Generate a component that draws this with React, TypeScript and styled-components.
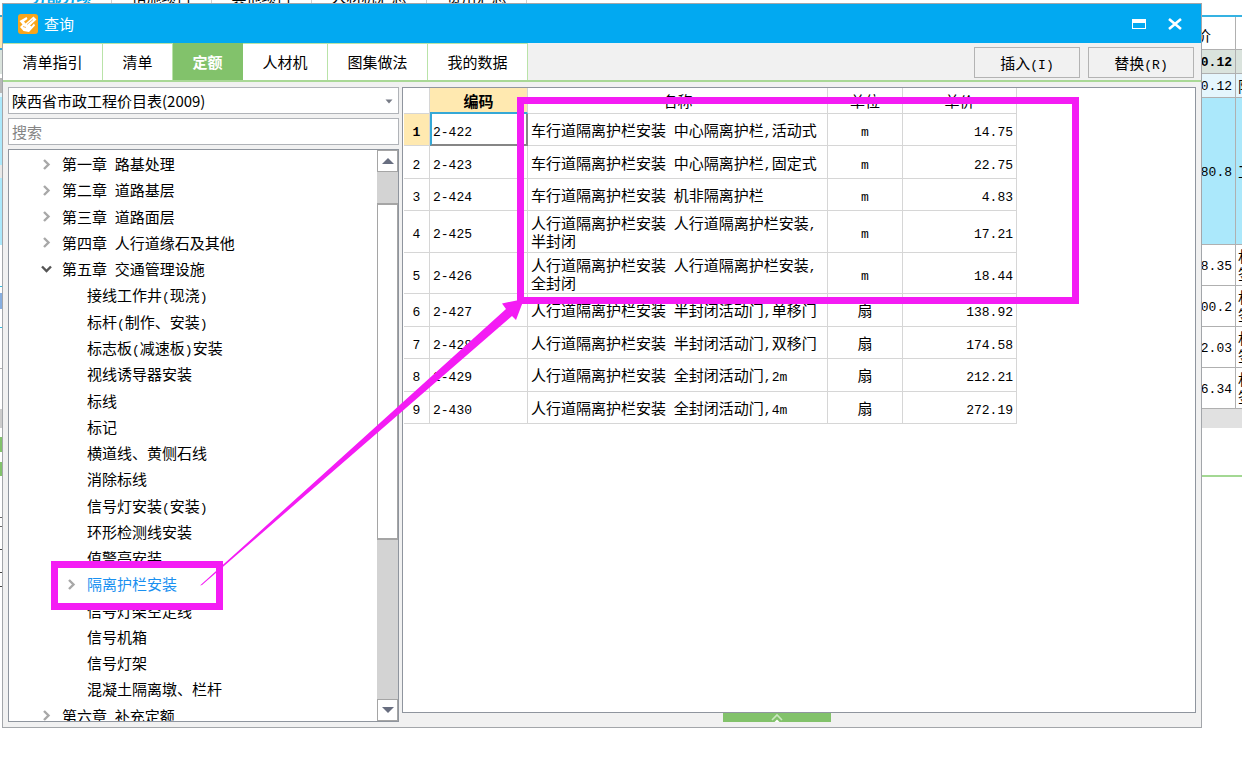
import React from "react";
import styled, { createGlobalStyle, css } from "styled-components";

const magenta = "#f41cf4";
const line = "#d6d6d6";

const GlobalStyle = createGlobalStyle`
  * { box-sizing: border-box; }
  body {
    margin: 0;
    background: #fff;
    color: #000;
    font: 15px/18px "Noto Sans CJK SC", sans-serif;
  }
  button, input, select { font: inherit; color: inherit; }
`;

const Page = styled.div`
  position: relative;
  min-height: 100vh;
  overflow: hidden;
`;

/* ---------- text with half-width runs ---------- */

const Half = styled.span`
  font-family: "Liberation Mono", monospace;
  font-size: 13px;
  line-height: 0;
`;

const Mixed = ({ text }: { text: string }) => (
  <>
    {text.split(/([\x20-\x7e]+)/).map((part, i) =>
      i % 2 ? <Half key={i}>{part}</Half> : part
    )}
  </>
);

/* ---------- main window behind the dialog ---------- */

const Backdrop = styled.div`
  position: absolute;
  inset: 0;
  display: flex;
  flex-direction: column;
`;

const BackTabs = styled.div`
  display: flex;
  align-items: flex-end;
  height: 6px;
  overflow: hidden;
  padding-left: 12px;
`;

const BackTab = styled.span<{ $active?: boolean; $wide?: boolean }>`
  width: ${(p) => (p.$wide ? 115 : 100)}px;
  text-align: center;
  border-right: 1px solid #d0d0d0;
  ${(p) => p.$active && css`color: #02a9f1; font-weight: 700;`}
`;

const BackBody = styled.div`
  flex: 1;
  display: flex;
  justify-content: space-between;
  padding-top: 9px;
`;

const BackEdge = styled.div`
  width: 3px;
`;

const Stripe = styled.div<{ $h: number; $bg?: string }>`
  height: ${(p) => p.$h}px;
  background: ${(p) => p.$bg || "#fff"};
`;

const BackSide = styled.div`
  width: 42px;
`;

const BackRow = styled.div<{ $h: number; $bg?: string; $bold?: boolean }>`
  display: flex;
  align-items: center;
  height: ${(p) => p.$h}px;
  background: ${(p) => p.$bg || "#fff"};
  border-bottom: 1px solid #b0b0b0;
  font-weight: ${(p) => (p.$bold ? 700 : 400)};
  overflow: hidden;
`;

const BackCell = styled.div<{ $head?: boolean }>`
  display: flex;
  justify-content: flex-end;
  align-items: center;
  align-self: stretch;
  width: 36px;
  padding: 3px ${(p) => (p.$head ? 24 : 3)}px 0 0;
  border-right: 1px solid #b0b0b0;
  flex: none;
  white-space: nowrap;
`;

const BackNote = styled.div`
  padding-left: 2px;
  width: 17px;
  flex: none;
  line-height: 18px;
`;

/* ---------- dialog ---------- */

const Dialog = styled.section`
  position: absolute;
  top: 3px;
  right: 40px;
  bottom: 44px;
  left: 2px;
  display: flex;
  flex-direction: column;
  background: #f1f1f1;
  border: 1px solid #a3a6aa;
`;

const TitleBar = styled.header`
  display: flex;
  align-items: center;
  gap: 6px;
  height: 39px;
  padding: 0 18px 0 15px;
  background: #02a9f1;
  color: #fff;
`;

const Title = styled.h1`
  flex: 1;
  margin: 0;
  font-size: 15px;
  font-weight: 400;
`;

const WindowButton = styled.button`
  display: flex;
  width: 16px;
  height: 16px;
  padding: 0;
  margin-left: 14px;
  border: 0;
  background: none;
`;

const Toolbar = styled.div`
  display: flex;
  align-items: stretch;
  height: 39px;
  flex: none;
  border-bottom: 2px solid #a9d896;
`;

const Tab = styled.button<{ $w: number; $active?: boolean }>`
  width: ${(p) => p.$w}px;
  padding: 0;
  border: 0;
  border-top: 1px solid #b9e3a8;
  border-right: 1px solid #b9e3a8;
  background: #fff;
  ${(p) => p.$active && css`
    background: #82c26b;
    border-color: #82c26b;
    color: #fff;
    font-weight: 700;
  `}
`;

const Actions = styled.div`
  display: flex;
  gap: 8px;
  margin-left: auto;
  padding: 4px 7px 2px 0;
`;

const ActionButton = styled.button`
  width: 106px;
  padding: 0;
  border: 1px solid #b3b3b3;
  background: #f1f1f1;
`;

const Content = styled.div`
  flex: 1;
  min-height: 0;
  display: flex;
  gap: 3px;
  padding: 5px;
`;

const SidePanel = styled.aside`
  display: flex;
  flex-direction: column;
  gap: 4px;
  width: 391px;
  flex: none;
`;

const SelectWrap = styled.label`
  position: relative;
  display: block;
  height: 27px;
`;

const BookSelect = styled.select`
  width: 100%;
  height: 100%;
  padding: 0 24px 0 3px;
  appearance: none;
  border: 1px solid #b0b3b8;
  border-radius: 0;
  background: #fff;
`;

const SelectArrow = styled.svg`
  position: absolute;
  top: 12px;
  right: 6px;
`;

const SearchInput = styled.input`
  height: 27px;
  padding: 0 3px;
  border: 1px solid #b0b3b8;
  background: #fff;
  &::placeholder { color: #858585; }
`;

const TreeBox = styled.div`
  flex: 1;
  min-height: 0;
  display: flex;
  border: 1px solid #8f959e;
  background: #fff;
  overflow: hidden;
`;

const TreeList = styled.ul`
  flex: 1;
  display: flex;
  flex-direction: column;
  margin: 1px 0 -8px;
  padding: 0;
  list-style: none;
`;

const TreeItem = styled.li<{ $child?: boolean; $selected?: boolean }>`
  flex: 1;
  display: flex;
  align-items: center;
  gap: 10px;
  padding-left: ${(p) => (p.$child ? 57 : 32)}px;
  color: ${(p) => (p.$selected ? "#1a90f0" : "#000")};
`;

const Chevron = styled.svg`
  flex: none;
  width: 11px;
  height: 11px;
  fill: none;
`;

const ScrollBar = styled.div`
  display: flex;
  flex-direction: column;
  width: 21px;
  background: #d3d3d3;
`;

const ScrollButton = styled.button`
  height: 22px;
  padding: 0;
  display: grid;
  place-items: center;
  border: 1px solid #a5a5a5;
  background: #fff;
`;

const ScrollTrack = styled.div`
  flex: 1;
  display: flex;
  flex-direction: column;
`;

const ScrollGap = styled.div<{ $grow: number }>`
  flex: ${(p) => p.$grow};
`;

const ScrollThumb = styled.div`
  flex: 336;
  background: #fff;
  border: 1px solid #a5a5a5;
  border-width: 2px 1px;
`;

const GridColumn = styled.main`
  flex: 1;
  min-width: 0;
  display: flex;
  flex-direction: column;
`;

const GridBox = styled.div`
  flex: 1;
  min-height: 0;
  padding-left: 1px;
  border: 1px solid #8f959e;
  background: #fff;
`;

const Table = styled.table`
  width: 613px;
  height: 336px;
  table-layout: fixed;
  border-collapse: separate;
  border-spacing: 0;
`;

const Col = styled.col<{ $w: number }>`
  width: ${(p) => p.$w}px;
`;

const cell = css`
  padding: 1px 3px 0;
  border: 0 solid ${line};
  border-width: 0 1px 1px 0;
  font-weight: 400;
  text-align: center;
`;

const Head = styled.th<{ $active?: boolean }>`
  ${cell}
  height: 26px;
  ${(p) => p.$active && css`
    background: #ffe9b0;
    border-bottom: 2px solid #35a8d6;
    font-weight: 700;
  `}
`;

const RowNumber = styled.th<{ $active?: boolean }>`
  ${cell}
  ${(p) => p.$active && css`
    background: #ffe9b0;
    font-weight: 700;
  `}
`;

const Row = styled.tr<{ $tall?: boolean }>`
  height: ${(p) => (p.$tall ? 41 : 32)}px;
`;

const Cell = styled.td<{ $align?: string; $focus?: boolean }>`
  ${cell}
  text-align: ${(p) => p.$align || "left"};
  ${(p) => p.$focus && css`
    padding-left: 1px;
    border-left: 2px solid #35a8d6;
    border-right: 2px solid #868686;
    border-bottom: 2px solid #868686;
  `}
`;

const Handle = styled.button`
  display: grid;
  place-items: center;
  align-self: center;
  width: 108px;
  height: 9px;
  margin-right: 44px;
  padding: 0;
  border: 0;
  background: #82c26b;
`;

const Annotation = styled.svg`
  position: absolute;
  top: 0;
  left: 0;
  pointer-events: none;
`;

/* ---------- data ---------- */

const tabs = [
  { label: "清单指引", w: 100 },
  { label: "清单", w: 70 },
  { label: "定额", w: 70, active: true },
  { label: "人材机", w: 85 },
  { label: "图集做法", w: 100 },
  { label: "我的数据", w: 100 },
];

type Node = { label: string; child?: boolean; icon?: "closed" | "open"; selected?: boolean };

const tree: Node[] = [
  { label: "第一章 路基处理", icon: "closed" },
  { label: "第二章 道路基层", icon: "closed" },
  { label: "第三章 道路面层", icon: "closed" },
  { label: "第四章 人行道缘石及其他", icon: "closed" },
  { label: "第五章 交通管理设施", icon: "open" },
  { label: "接线工作井(现浇)", child: true },
  { label: "标杆(制作、安装)", child: true },
  { label: "标志板(减速板)安装", child: true },
  { label: "视线诱导器安装", child: true },
  { label: "标线", child: true },
  { label: "标记", child: true },
  { label: "横道线、黄侧石线", child: true },
  { label: "消除标线", child: true },
  { label: "信号灯安装(安装)", child: true },
  { label: "环形检测线安装", child: true },
  { label: "值警亭安装", child: true },
  { label: "隔离护栏安装", child: true, icon: "closed", selected: true },
  { label: "信号灯架空走线", child: true },
  { label: "信号机箱", child: true },
  { label: "信号灯架", child: true },
  { label: "混凝土隔离墩、栏杆", child: true },
  { label: "第六章 补充定额", icon: "closed" },
];

const rows = [
  ["2-422", "车行道隔离护栏安装 中心隔离护栏,活动式", "m", "14.75"],
  ["2-423", "车行道隔离护栏安装 中心隔离护栏,固定式", "m", "22.75"],
  ["2-424", "车行道隔离护栏安装 机非隔离护栏", "m", "4.83"],
  ["2-425", "人行道隔离护栏安装 人行道隔离护栏安装,半封闭", "m", "17.21"],
  ["2-426", "人行道隔离护栏安装 人行道隔离护栏安装,全封闭", "m", "18.44"],
  ["2-427", "人行道隔离护栏安装 半封闭活动门,单移门", "扇", "138.92"],
  ["2-428", "人行道隔离护栏安装 半封闭活动门,双移门", "扇", "174.58"],
  ["2-429", "人行道隔离护栏安装 全封闭活动门,2m", "扇", "212.21"],
  ["2-430", "人行道隔离护栏安装 全封闭活动门,4m", "扇", "272.19"],
];

const backRows = ["8.35", "00.2", "2.03", "6.34"];

const leftStripes: [number, string][] = [
  [2, "#35a8d6"], [31, "#ffe9b0"], [2, "#35a8d6"], [24, "#dae3dd"], [4, "#ffffff"],
  [15, "#b8b8b8"], [4, "#e5f6fd"], [68, "#abe8fb"], [13, "#e8e8e8"], [67, "#abe8fb"],
  [41, "#ffffff"], [1, "#35bde0"], [6, "#ffffff"], [16, "#86aee0"], [18, "#ffffff"],
  [1, "#35bde0"], [40, "#ffffff"], [1, "#b0b0b0"], [40, "#ffffff"], [19, "#cccccc"],
  [9, "#ffffff"], [15, "#82c26b"], [10, "#ffffff"], [14, "#82c26b"], [41, "#ffffff"],
  [1, "#666666"], [8, "#ffffff"], [1, "#666666"], [22, "#ffffff"], [1, "#444444"],
  [22, "#ffffff"], [1, "#444444"], [13, "#ffffff"], [1, "#444444"],
];

const TreeIcon = ({ open }: { open?: boolean }) => (
  <Chevron viewBox="0 0 11 11" aria-hidden="true">
    {open ? (
      <path d="M1 2.5 L5.5 7 L10 2.5" stroke="#555" strokeWidth="2.4" />
    ) : (
      <path d="M3 1 L7.5 5.5 L3 10" stroke="#a8a8a8" strokeWidth="2.4" />
    )}
  </Chevron>
);

export default function App() {
  return (
    <Page>
      <GlobalStyle />
      <Backdrop aria-hidden="true">
        <BackTabs>
          <BackTab $active>分部分项</BackTab>
          <BackTab>措施项目</BackTab>
          <BackTab>其他项目</BackTab>
          <BackTab $wide>人材机汇总</BackTab>
          <BackTab>费用汇总</BackTab>
        </BackTabs>
        <BackBody>
          <BackEdge>
            {leftStripes.map(([h, bg], i) => (
              <Stripe key={i} $h={h} $bg={bg} />
            ))}
          </BackEdge>
          <BackSide>
            <Stripe $h={2} $bg="#35b2e2" />
            <BackRow $h={33}><BackCell $head>单价</BackCell></BackRow>
            <BackRow $h={24} $bg="#dae3dd" $bold><BackCell><Half>0.12</Half></BackCell></BackRow>
            <BackRow $h={24} $bg="#e5f6fd"><BackCell><Half>0.12</Half></BackCell><BackNote>附</BackNote></BackRow>
            <BackRow $h={147} $bg="#abe8fb"><BackCell><Half>80.8</Half></BackCell><BackNote>工</BackNote></BackRow>
            {backRows.map((value) => (
              <BackRow key={value} $h={41}>
                <BackCell><Half>{value}</Half></BackCell>
                <BackNote>机 签</BackNote>
              </BackRow>
            ))}
            <Stripe $h={19} $bg="#e1e1e1" />
            <Stripe $h={47} />
            <Stripe $h={2} $bg="#a3d893" />
          </BackSide>
        </BackBody>
      </Backdrop>

      <Dialog role="dialog" aria-label="查询">
        <TitleBar>
          <svg width="20" height="20" viewBox="0 0 20 20" aria-hidden="true">
            <rect width="20" height="20" rx="3" fill="#f9a51a" />
            <path d="M1.5 7 L8.5 3 L9.5 5 L6 7.5 L7.5 9.5 L15.5 2.5 L18.5 5.5 L12 11.5 L13.5 12.5 L16 9.5 L17 11.5 L11 18 L5.5 17 L2 13 L4.5 10.5 Z" fill="#fff" />
            <path d="M5 12.5 L8 13.5 M9 10.5 L15 5.5" stroke="#f6bb62" strokeWidth="1" />
          </svg>
          <Title>查询</Title>
          <WindowButton aria-label="最大化">
            <svg width="16" height="16" viewBox="0 0 16 16">
              <path d="M1 3 H15 V13 H1 Z M2 7 V12 H14 V7 Z" fill="#fff" fillRule="evenodd" />
            </svg>
          </WindowButton>
          <WindowButton aria-label="关闭">
            <svg width="16" height="16" viewBox="0 0 16 16">
              <path d="M2 3 L14 13 M14 3 L2 13" stroke="#fff" strokeWidth="2.6" />
            </svg>
          </WindowButton>
        </TitleBar>

        <Toolbar>
          {tabs.map((t) => (
            <Tab key={t.label} $w={t.w} $active={t.active}>{t.label}</Tab>
          ))}
          <Actions>
            <ActionButton><Mixed text="插入(I)" /></ActionButton>
            <ActionButton><Mixed text="替换(R)" /></ActionButton>
          </Actions>
        </Toolbar>

        <Content>
          <SidePanel>
            <SelectWrap>
              <BookSelect aria-label="定额库">
                <option>陕西省市政工程价目表(2009)</option>
              </BookSelect>
              <SelectArrow width="8" height="5" viewBox="0 0 8 5" aria-hidden="true">
                <path d="M0.5 0.5 H7.5 L4 4.5 Z" fill="#777b86" />
              </SelectArrow>
            </SelectWrap>
            <SearchInput placeholder="搜索" aria-label="搜索" />
            <TreeBox>
              <TreeList>
                {tree.map((n) => (
                  <TreeItem
                    key={n.label}
                    $child={n.child}
                    $selected={n.selected}
                  >
                    {n.icon ? <TreeIcon open={n.icon === "open"} /> : <Chevron aria-hidden="true" />}
                    <span><Mixed text={n.label} /></span>
                  </TreeItem>
                ))}
              </TreeList>
              <ScrollBar>
                <ScrollButton aria-label="向上滚动">
                  <svg width="12" height="6" viewBox="0 0 12 6"><path d="M0 6 L6 0 L12 6 Z" fill="#686e80" /></svg>
                </ScrollButton>
                <ScrollTrack>
                  <ScrollGap $grow={31} />
                  <ScrollThumb />
                  <ScrollGap $grow={160} />
                </ScrollTrack>
                <ScrollButton aria-label="向下滚动">
                  <svg width="12" height="6" viewBox="0 0 12 6"><path d="M0 0 L6 6 L12 0 Z" fill="#686e80" /></svg>
                </ScrollButton>
              </ScrollBar>
            </TreeBox>
          </SidePanel>

          <GridColumn>
            <GridBox>
              <Table>
                <colgroup>
                  <Col $w={26} />
                  <Col $w={98} />
                  <Col $w={300} />
                  <Col $w={75} />
                  <Col $w={114} />
                </colgroup>
                <thead>
                  <tr>
                    <Head />
                    <Head $active>编码</Head>
                    <Head>名称</Head>
                    <Head>单位</Head>
                    <Head>单价</Head>
                  </tr>
                </thead>
                <tbody>
                  {rows.map(([code, name, unit, price], i) => (
                    <Row key={code} $tall={i === 3 || i === 4}>
                      <RowNumber scope="row" $active={i === 0}><Half>{i + 1}</Half></RowNumber>
                      <Cell $focus={i === 0}><Half>{code}</Half></Cell>
                      <Cell><Mixed text={name} /></Cell>
                      <Cell $align="center"><Mixed text={unit} /></Cell>
                      <Cell $align="right"><Half>{price}</Half></Cell>
                    </Row>
                  ))}
                </tbody>
              </Table>
            </GridBox>
            <Handle aria-label="展开">
              <svg width="12" height="9" viewBox="0 0 12 9">
                <path d="M1 7 L6 2 L11 7" fill="none" stroke="#cbe8c0" strokeWidth="1.6" />
                <path d="M3.5 9 L6 6.5 L8.5 9 Z" fill="#fff" />
              </svg>
            </Handle>
          </GridColumn>
        </Content>
      </Dialog>

      <Annotation width="1100" height="640" viewBox="0 0 1100 640" aria-hidden="true">
        <g fill="none" stroke={magenta} strokeWidth="7">
          <rect x="520.5" y="100.5" width="555" height="200" />
          <rect x="54.5" y="564.5" width="165" height="42" />
        </g>
        <path d="M200 585.5 L506 309 L502 303.5 L524 299 L516 320 L512 316 L202 585 Z" fill={magenta} />
      </Annotation>
    </Page>
  );
}
